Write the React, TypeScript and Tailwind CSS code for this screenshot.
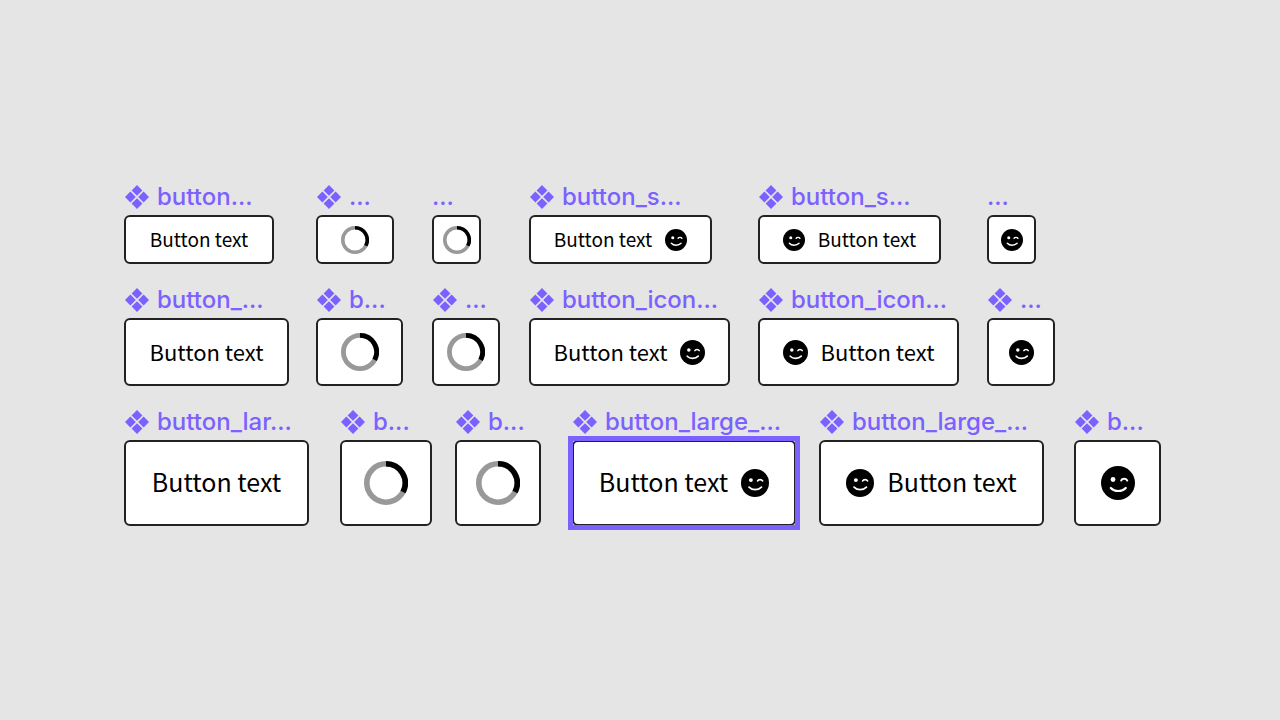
import type { ReactNode } from "react";

type Size = "small" | "medium" | "large";

const heights: Record<Size, string> = { small: "h-[49px]", medium: "h-[68px]", large: "h-[86px]" };
const texts: Record<Size, string> = { small: "text-[19px]", medium: "text-[22px]", large: "text-[25px]" };
const spinners: Record<Size, string> = { small: "size-7", medium: "size-[38px]", large: "size-11" };
const smileys: Record<Size, string> = { small: "size-[22px]", medium: "size-[25px]", large: "size-7" };

function ComponentMark() {
  return (
    <svg viewBox="0 0 24 24" className="size-6 shrink-0 fill-[#7b61ff]" aria-hidden="true">
      <path d="M12 0l5.4 5.4L12 10.8 6.6 5.4zM12 13.2l5.4 5.4L12 24l-5.4-5.4zM5.4 6.6l5.4 5.4-5.4 5.4L0 12zM18.6 6.6L24 12l-5.4 5.4-5.4-5.4z" />
    </svg>
  );
}

function Smiley({ className }: { className: string }) {
  return (
    <svg viewBox="0 0 34 34" className={`shrink-0 ${className}`} aria-hidden="true">
      <circle cx="17" cy="17" r="17" fill="#000" />
      <circle cx="12" cy="13.5" r="2.4" fill="#fff" />
      <path d="M20.2 14.5C21.2 12.3 25 12.3 26.2 14.5" fill="none" stroke="#fff" strokeWidth="2" strokeLinecap="round" />
      <path d="M9.8 22C13.4 26 21 26 24.8 22" fill="none" stroke="#fff" strokeWidth="2.2" strokeLinecap="round" />
    </svg>
  );
}

function Spinner({ size }: { size: Size }) {
  return (
    <svg viewBox="0 0 44 44" className={`shrink-0 ${spinners[size]}`} fill="none" strokeWidth="5.6" aria-hidden="true">
      <circle cx="22" cy="22" r="19.2" stroke="#999" />
      <path d="M22 2.8A19.2 19.2 0 0 1 39 31" stroke="#000" />
    </svg>
  );
}

function Caption() {
  return <span className="pb-[3px]">Button text</span>;
}

function Frame({ label, mark = true, name, size, width, selected = false, children }: {
  label: string;
  mark?: boolean;
  name?: string;
  size: Size;
  width: string;
  selected?: boolean;
  children: ReactNode;
}) {
  return (
    <div className={width}>
      <div className={`flex h-9 items-center gap-2 whitespace-nowrap text-[24px] font-medium leading-9 text-[#7b61ff] ${mark ? "pl-px" : ""}`}>
        {mark && <ComponentMark />}
        <span>{label}</span>
      </div>
      <div className={selected ? "outline-5 -outline-offset-1 outline-[#7b61ff]" : ""}>
        <button
          type="button"
          aria-label={name}
          className={`flex w-full items-center justify-center gap-[13px] rounded-md border-2 border-[#222] bg-white font-['Noto_Sans_CJK_SC',sans-serif] leading-none text-black ${heights[size]} ${texts[size]}`}
        >
          {children}
        </button>
      </div>
    </div>
  );
}

export default function App() {
  return (
    <main className="min-h-screen bg-[#e5e5e5] pt-[179px] pl-[124px] font-['Inter',sans-serif]">
      <section className="grid grid-cols-[192px_116px_97px_229px_229px_auto] gap-y-[18px]">
        <Frame label="button..." size="small" width="w-[150px]"><Caption /></Frame>
        <Frame label="..." name="Loading" size="small" width="w-[78px]"><Spinner size="small" /></Frame>
        <Frame label="..." mark={false} name="Loading" size="small" width="w-[49px]"><Spinner size="small" /></Frame>
        <Frame label="button_s..." size="small" width="w-[183px]"><Caption /><Smiley className={smileys.small} /></Frame>
        <Frame label="button_s..." size="small" width="w-[183px]"><Smiley className={smileys.small} /><Caption /></Frame>
        <Frame label="..." mark={false} name="Smile" size="small" width="w-[49px]"><Smiley className={smileys.small} /></Frame>

        <Frame label="button_..." size="medium" width="w-[165px]"><Caption /></Frame>
        <Frame label="b..." name="Loading" size="medium" width="w-[87px]"><Spinner size="medium" /></Frame>
        <Frame label="..." name="Loading" size="medium" width="w-[68px]"><Spinner size="medium" /></Frame>
        <Frame label="button_icon..." size="medium" width="w-[201px]"><Caption /><Smiley className={smileys.medium} /></Frame>
        <Frame label="button_icon..." size="medium" width="w-[201px]"><Smiley className={smileys.medium} /><Caption /></Frame>
        <Frame label="..." name="Smile" size="medium" width="w-[68px]"><Smiley className={smileys.medium} /></Frame>
      </section>
      <section className="mt-[18px] grid grid-cols-[216px_115px_117px_247px_255px_auto]">
        <Frame label="button_lar..." size="large" width="w-[185px]"><Caption /></Frame>
        <Frame label="b..." name="Loading" size="large" width="w-[92px]"><Spinner size="large" /></Frame>
        <Frame label="b..." name="Loading" size="large" width="w-[86px]"><Spinner size="large" /></Frame>
        <Frame label="button_large_..." size="large" width="w-[224px]" selected><Caption /><Smiley className={smileys.large} /></Frame>
        <Frame label="button_large_..." size="large" width="w-[225px]"><Smiley className={smileys.large} /><Caption /></Frame>
        <Frame label="b..." name="Smile" size="large" width="w-[87px]"><Smiley className="size-[34px]" /></Frame>
      </section>
    </main>
  );
}
